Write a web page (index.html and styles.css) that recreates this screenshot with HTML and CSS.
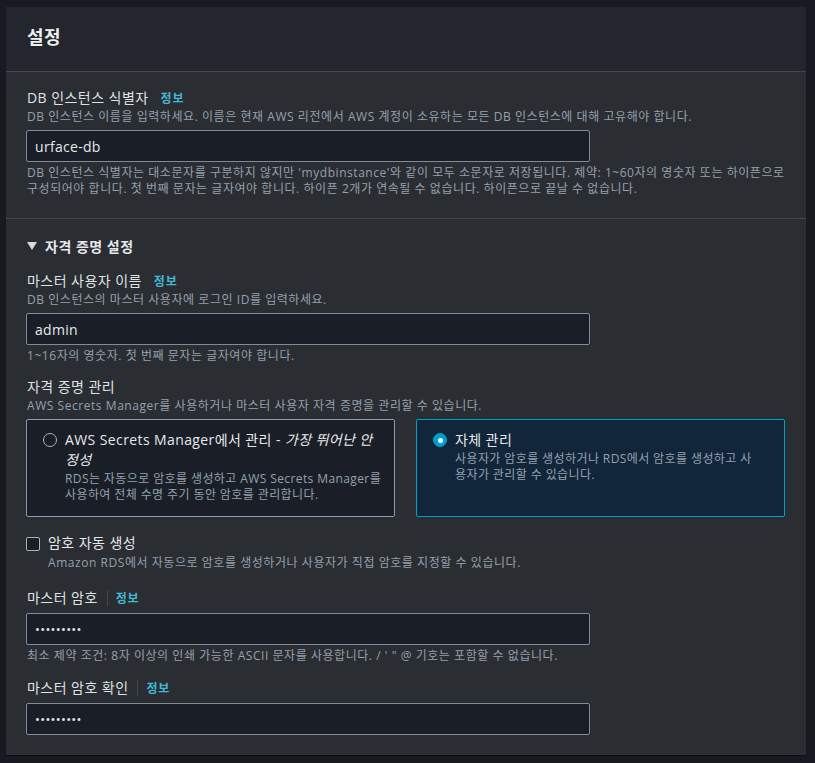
FILE: index.html
```html
<!DOCTYPE html>
<html lang="ko">
<head>
<meta charset="utf-8">
<title>설정</title>
<link rel="stylesheet" href="styles.css">
</head>
<body>
<div class="panel">
  <div class="panel-header">
    <h2 class="title">설정</h2>
  </div>

  <div class="section first">
    <div class="label-row"><span class="label">DB 인스턴스 식별자</span><a class="info">정보</a></div>
    <div class="desc">DB 인스턴스 이름을 입력하세요. 이름은 현재 AWS 리전에서 AWS 계정이 소유하는 모든 DB 인스턴스에 대해 고유해야 합니다.</div>
    <input class="field" type="text" value="urface-db">
    <div class="help">DB 인스턴스 식별자는 대소문자를 구분하지 않지만 'mydbinstance'와 같이 모두 소문자로 저장됩니다. 제약: 1~60자의 영숫자 또는 하이픈으로 구성되어야 합니다. 첫 번째 문자는 글자여야 합니다. 하이픈 2개가 연속될 수 없습니다. 하이픈으로 끝날 수 없습니다.</div>
  </div>

  <div class="section second">
    <div class="expander"><svg class="caret" width="10" height="8" viewBox="0 0 10 8"><path d="M0 0 H10 L5 8 Z" fill="#d5dbdb"/></svg><span>자격 증명 설정</span></div>

    <div class="group g-user">
      <div class="label-row"><span class="label">마스터 사용자 이름</span><a class="info">정보</a></div>
      <div class="desc">DB 인스턴스의 마스터 사용자에 로그인 ID를 입력하세요.</div>
      <input class="field" type="text" value="admin">
      <div class="help">1~16자의 영숫자. 첫 번째 문자는 글자여야 합니다.</div>
    </div>

    <div class="group g-cred">
      <div class="label-row"><span class="label">자격 증명 관리</span></div>
      <div class="desc">AWS Secrets Manager를 사용하거나 마스터 사용자 자격 증명을 관리할 수 있습니다.</div>
      <div class="tiles">
        <div class="tile">
          <span class="radio"></span>
          <div class="tile-body">
            <div class="tile-title">AWS Secrets Manager에서 관리 - <em>가장 뛰어난 안<br>정성</em></div>
            <div class="tile-desc">RDS는 자동으로 암호를 생성하고 AWS Secrets Manager를<br>사용하여 전체 수명 주기 동안 암호를 관리합니다.</div>
          </div>
        </div>
        <div class="tile selected">
          <span class="radio on"></span>
          <div class="tile-body">
            <div class="tile-title">자체 관리</div>
            <div class="tile-desc">사용자가 암호를 생성하거나 RDS에서 암호를 생성하고 사<br>용자가 관리할 수 있습니다.</div>
          </div>
        </div>
      </div>
    </div>

    <div class="check-row">
      <span class="checkbox"></span>
      <div>
        <div class="check-label">암호 자동 생성</div>
        <div class="desc">Amazon RDS에서 자동으로 암호를 생성하거나 사용자가 직접 암호를 지정할 수 있습니다.</div>
      </div>
    </div>

    <div class="group g-pass">
      <div class="label-row"><span class="label">마스터 암호</span><span class="divider"></span><a class="info">정보</a></div>
      <input class="field pw" type="text" value="•••••••••">
      <div class="help">최소 제약 조건: 8자 이상의 인쇄 가능한 ASCII 문자를 사용합니다. / ' " @ 기호는 포함할 수 없습니다.</div>
    </div>

    <div class="group g-pass2">
      <div class="label-row"><span class="label">마스터 암호 확인</span><span class="divider"></span><a class="info">정보</a></div>
      <input class="field pw" type="text" value="•••••••••">
    </div>
  </div>
</div>
</body>
</html>
```
FILE: styles.css
```css
* { box-sizing: border-box; }
html, body { margin: 0; padding: 0; }
body {
  background: #171a21;
  padding: 7px 9px 0 6px;
  font-family: "Open Sans", "Noto Sans CJK KR", sans-serif;
  color: #d5dbdb;
  height: 763px;
  overflow: hidden;
}
.panel {
  width: 800px;
  background: #2a2d32;
  box-shadow: 0 1px 1px rgba(0,0,0,0.4);
}
.panel-header {
  height: 65px;
  background: #23262c;
  border-bottom: 1px solid #414750;
  padding: 17px 21px 0 21px;
}
.title {
  margin: 0;
  font-size: 18px;
  line-height: 26px;
  font-weight: 700;
  color: #eef0f1;
  letter-spacing: 0.5px;
}
.section {
  padding: 0 21px 0 20px;
}
.section.first {
  padding-top: 16px;
  padding-bottom: 21px;
  border-bottom: 1px solid #414750;
}
.section.second {
  padding-top: 17px;
  padding-bottom: 20px;
}
.label-row {
  display: flex;
  align-items: center;
  height: 20px;
  padding-left: 1px;
}
.label {
  font-size: 14px;
  line-height: 20px;
  color: #dfe2e4;
  letter-spacing: 0.45px;
}
.info {
  font-size: 12px;
  font-weight: 700;
  color: #44b9d6;
  margin-left: 12px;
  letter-spacing: 0.8px;
}
.divider {
  width: 1px;
  height: 16px;
  background: #414750;
  margin-left: 9px;
}
.divider + .info { margin-left: 8px; }
.desc, .help {
  font-size: 12px;
  line-height: 16px;
  color: #95a1ad;
  padding-left: 1px;
  letter-spacing: 0.55px;
}
.label-row + .desc { margin-top: 1px; }
.field {
  display: block;
  width: 564px;
  height: 32px;
  margin: 5px 0 0 0;
  padding: 0 8px;
  background: #1a1f27;
  border: 1px solid #7f8b98;
  border-radius: 2px;
  font-family: "Open Sans", "Noto Sans CJK KR", sans-serif;
  font-size: 14px;
  color: #e5e8ea;
  outline: none;
  letter-spacing: 0.3px;
}
.field.pw { font-size: 13px; letter-spacing: 0.3px; }
.help { margin-top: 3px; }
.expander {
  display: flex;
  align-items: center;
  height: 20px;
  font-size: 14px;
  font-weight: 700;
  color: #e5e8ea;
  padding-left: 1px;
  letter-spacing: 0.5px;
}
.caret { margin-right: 8px; }
.group.g-user { margin-top: 15px; }
.group.g-cred { margin-top: 13px; }
.tiles {
  display: grid;
  grid-template-columns: 369px 369px;
  column-gap: 21px;
  margin-top: 5px;
}
.tile {
  height: 98px;
  display: flex;
  align-items: flex-start;
  padding: 10px 8px 0 16px;
  background: #1a1f27;
  border: 1px solid #8d99a8;
  border-radius: 2px;
}
.tile.selected {
  background: #12263b;
  border-color: #00a1c9;
}
.radio {
  flex: none;
  width: 14px;
  height: 14px;
  margin-top: 3px;
  border: 1.5px solid #aab4bf;
  border-radius: 50%;
  position: relative;
}
.radio.on {
  background: #00a1c9;
  border-color: #00a1c9;
}
.radio.on::after {
  content: "";
  position: absolute;
  left: 50%; top: 50%;
  width: 5px; height: 5px;
  margin: -2.5px 0 0 -2.5px;
  background: #ffffff;
  border-radius: 50%;
}
.tile-body { margin-left: 8px; min-width: 0; }
.tile-title {
  font-size: 14px;
  line-height: 20px;
  color: #e5e8ea;
  letter-spacing: 0.4px;
  white-space: nowrap;
}
.tile-title em { font-style: italic; }
.tile-desc {
  font-size: 12px;
  line-height: 16px;
  color: #95a1ad;
  margin-top: 1px;
  letter-spacing: 0.4px;
  white-space: nowrap;
}
.check-row {
  display: flex;
  align-items: flex-start;
  margin-top: 16px;
}
.checkbox {
  flex: none;
  width: 14px;
  height: 14px;
  margin-top: 4px;
  background: #1a1f27;
  border: 1.5px solid #aab4bf;
  border-radius: 2px;
  margin-right: 8px;
}
.check-label {
  font-size: 14px;
  line-height: 20px;
  color: #e5e8ea;
  letter-spacing: 0.45px;
}
.check-row .desc { padding-left: 0; margin-top: 2px; }
.group.g-pass { margin-top: 17px; }
.group.g-pass2 { margin-top: 14px; }
```
